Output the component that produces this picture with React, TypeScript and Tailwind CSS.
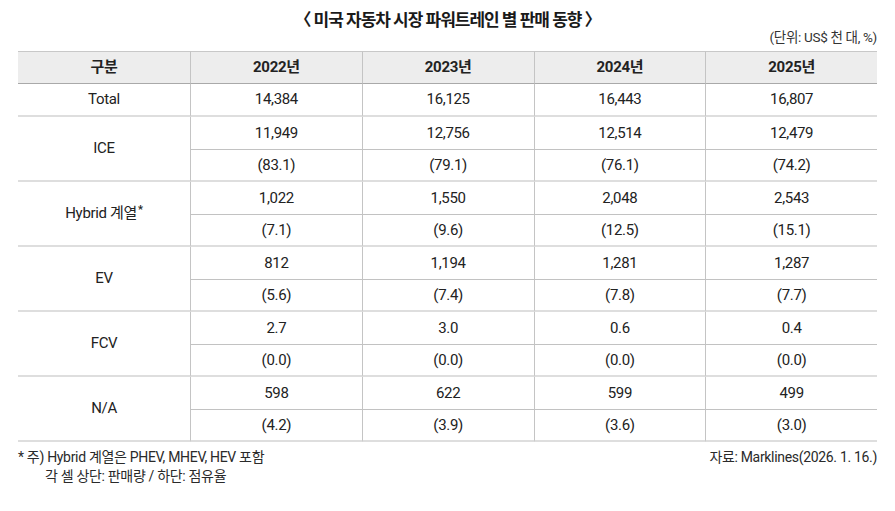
const years = ['2022년', '2023년', '2024년', '2025년'];

const groups = [
  { label: 'ICE', top: ['11,949', '12,756', '12,514', '12,479'], bottom: ['(83.1)', '(79.1)', '(76.1)', '(74.2)'] },
  { label: 'Hybrid 계열', sup: true, top: ['1,022', '1,550', '2,048', '2,543'], bottom: ['(7.1)', '(9.6)', '(12.5)', '(15.1)'] },
  { label: 'EV', top: ['812', '1,194', '1,281', '1,287'], bottom: ['(5.6)', '(7.4)', '(7.8)', '(7.7)'] },
  { label: 'FCV', top: ['2.7', '3.0', '0.6', '0.4'], bottom: ['(0.0)', '(0.0)', '(0.0)', '(0.0)'] },
  { label: 'N/A', top: ['598', '622', '599', '499'], bottom: ['(4.2)', '(3.9)', '(3.6)', '(3.0)'] },
];

const font = { fontFamily: 'Roboto, "Noto Sans CJK KR", sans-serif' };

export default function App() {
  return (
    <div className="w-[895px] h-[511px] bg-white text-[#222] px-[18px] tracking-[-0.02em]" style={font}>
      {/* Title */}
      <div className="pt-[9px] h-[30px] leading-[22px] text-center text-[17px] font-bold tracking-[-0.06em] text-[#1a1a1a]">
        〈 미국 자동차 시장 파워트레인 별 판매 동향 〉
      </div>
      <div className="h-[21px] leading-[14px] text-right text-[13.5px] text-[#333]">(단위: US$ 천 대, %)</div>

      {/* Table */}
      <div className="grid grid-cols-[172px_1fr_1fr_1fr_1fr] text-[15px]">
        <div className="h-[33px] flex items-center justify-center bg-[#ededed] border-t border-b border-t-[#c8c8c8] border-b-[#a9a9a9] font-bold">구분</div>
        {years.map((y) => (
          <div key={y} className="h-[33px] flex items-center justify-center bg-[#ededed] border-t border-b border-l border-t-[#c8c8c8] border-b-[#a9a9a9] border-l-[#c4c4c4] font-bold">
            {y}
          </div>
        ))}

        <div className="h-[33px] flex items-center justify-center border-b-2 border-[#dedede]">Total</div>
        {['14,384', '16,125', '16,443', '16,807'].map((v) => (
          <div key={v} className="h-[33px] flex items-center justify-center border-b-2 border-b-[#dedede] border-l border-l-[#c4c4c4]">
            {v}
          </div>
        ))}

        {groups.map((g) => (
          <div key={g.label} className="contents">
            <div className="h-[65px] row-span-2 flex items-center justify-center border-b-2 border-[#dedede]">
              <span>
                {g.label}
                {g.sup && <sup className="text-[11px] font-bold ml-[1px] -top-[0.5em]">*</sup>}
              </span>
            </div>
            {g.top.map((v, i) => (
              <div key={'t' + i} className="h-[33px] flex items-center justify-center border-b border-b-[#c2c2c2] border-l border-l-[#c4c4c4]">
                {v}
              </div>
            ))}
            {g.bottom.map((v, i) => (
              <div key={'b' + i} className="h-[32px] flex items-center justify-center border-b-2 border-b-[#dedede] border-l border-l-[#c4c4c4]">
                {v}
              </div>
            ))}
          </div>
        ))}
      </div>

      {/* Notes */}
      <div className="mt-[6px] flex justify-between text-[14px] leading-[19px] text-[#2a2a2a]">
        <div>
          <div>* 주) Hybrid 계열은 PHEV, MHEV, HEV 포함</div>
          <div className="pl-[27px]">각 셀 상단: 판매량 / 하단: 점유율</div>
        </div>
        <div>자료: Marklines(2026. 1. 16.)</div>
      </div>
    </div>
  );
}
